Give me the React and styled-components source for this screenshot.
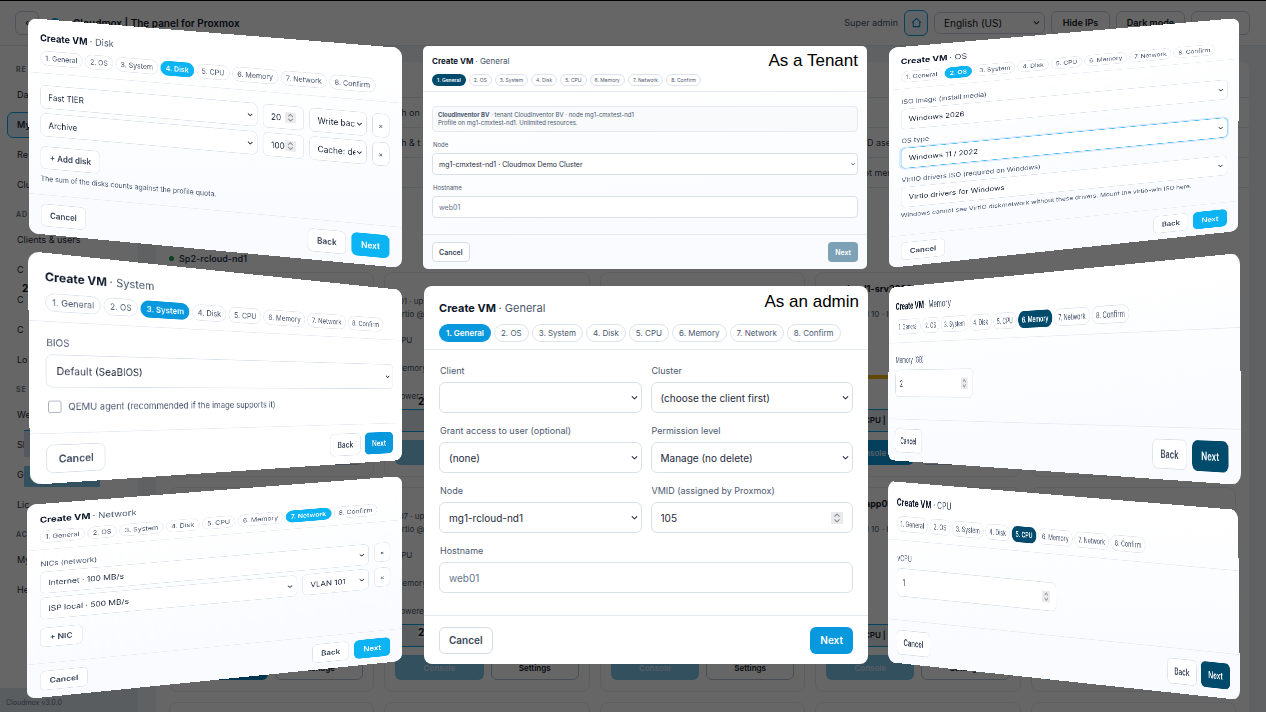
import React, { useId } from "react";
import styled, { createGlobalStyle, css, ThemeProvider } from "styled-components";

const GlobalStyle = createGlobalStyle`
  * { box-sizing: border-box; }
  html, body { margin: 0; height: 100%; overflow: hidden; background: #ffffff; }
  body, button, input, select { font-family: Inter, "Liberation Sans", sans-serif; }
  #root { height: 100%; }
`;

/* ---------- sizes shared by the dialogs ---------- */

const full = {
  pad: 21, radius: 15, headTop: 22, headH: 93, title: 16, titleLine: 20, titleGap: 12,
  pill: 12, pillH: 25, pillX: 8, pillGap: 4, bodyTop: 20, rowGap: 17, labelGap: 8,
  label: 13, labelLine: 16, control: 45, input: 14, inputX: 13, chevron: 13, chevX: 5,
  spin: 18, spinGap: 8,
  fieldRadius: 9, footH: 69, btnH: 39, btnX: 15, btnGap: 9, btnRadius: 9, help: 12, colGap: 14,
};
const regular = {
  pad: 15, radius: 8, headTop: 15, headH: 64, title: 11, titleLine: 14, titleGap: 9,
  pill: 8, pillH: 18, pillX: 6, pillGap: 3, bodyTop: 15, rowGap: 12, labelGap: 5,
  label: 9, labelLine: 12, control: 31, input: 10, inputX: 9, chevron: 9, chevX: 2,
  spin: 12, spinGap: 7,
  fieldRadius: 6, footH: 49, btnH: 27, btnX: 9, btnGap: 6, btnRadius: 6, help: 8, colGap: 9,
};
const compact = {
  pad: 9, radius: 5, headTop: 10, headH: 46, title: 8, titleLine: 10, titleGap: 8,
  pill: 5, pillH: 12, pillX: 4, pillGap: 3, bodyTop: 14, rowGap: 9, labelGap: 4,
  label: 6, labelLine: 8, control: 22, input: 7, inputX: 6, chevron: 6, chevX: 1,
  spin: 8, spinGap: 4,
  fieldRadius: 4, footH: 35, btnH: 20, btnX: 6, btnGap: 4, btnRadius: 4, help: 6, colGap: 6,
};
const m = (key) => ({ theme }) => `${theme[key]}px`;

const ACCENTS = { sky: "#0db4f4", blue: "#0798dd", navy: "#004a6c" };

/* Projects a width x height plane onto four corners: top left, top right, bottom right, bottom left. */
function project(w, h, [[x0, y0], [x1, y1], [x2, y2], [x3, y3]]) {
  const dx1 = x1 - x2, dx2 = x3 - x2, sx = x0 - x1 + x2 - x3;
  const dy1 = y1 - y2, dy2 = y3 - y2, sy = y0 - y1 + y2 - y3;
  const den = dx1 * dy2 - dx2 * dy1;
  const g = (sx * dy2 - dx2 * sy) / den;
  const k = (dx1 * sy - sx * dy1) / den;
  return `matrix3d(${[
    (x1 - x0 + g * x1) / w, (y1 - y0 + g * y1) / w, 0, g / w,
    (x3 - x0 + k * x3) / h, (y3 - y0 + k * y3) / h, 0, k / h,
    0, 0, 1, 0,
    x0, y0, 0, 1,
  ].join(",")})`;
}

/* ---------- page behind the dialogs ---------- */

const Page = styled.div`
  position: relative; height: 100%; min-height: 100%; overflow: hidden;
  display: flex; flex-direction: column; background: #edf2f7; color: #0f172a;
`;
const TopBar = styled.header`
  display: flex; align-items: center; gap: 6px; height: 46px; flex: none;
  padding: 0 16px 0 15px; background: #ffffff; border-bottom: 1px solid #e2e8f0;
`;
const BarButton = styled.button`
  height: 24px; padding: 0 8px; min-width: ${(p) => p.$min || 0}px; border-radius: 6px;
  border: 1px solid ${(p) => (p.$home ? "#0ea5e9" : "#cbd5e1")}; background: ${(p) => (p.$home ? "#f0f9ff" : "#fff")};
  color: ${(p) => (p.$home ? "#0284c7" : "#0f172a")}; font-size: 9px; font-weight: 600;
  ${(p) => p.$home && css`width: 24px; height: 26px; padding: 0; display: grid; place-items: center;`}
`;
const Brand = styled.strong`
  display: flex; align-items: center; gap: 12px; margin-left: 4px; font-size: 10px; font-weight: 600; flex: 1;
`;
const Role = styled.span` font-size: 9px; color: #475569; `;
const BarSelect = styled.label`
  display: flex; align-items: center; width: 111px; height: 22px; padding: 0 3px 0 9px;
  border: 1px solid #cbd5e1; border-radius: 6px;
  select { flex: 1; min-width: 0; border: 0; padding: 0; background: transparent; appearance: none; font-size: 10px; color: inherit; }
`;
const Shell = styled.div` flex: 1; min-height: 0; display: flex; `;
const Sidebar = styled.nav`
  width: 138px; flex: none; display: flex; flex-direction: column; background: #fff; padding: 16px 0 0;
`;
const NavTitle = styled.span`
  height: 16px; line-height: 16px; padding-left: 16px; margin: ${(p) => (p.$first ? 0 : 5)}px 0 4px;
  font-size: 7px; font-weight: 600; letter-spacing: 1px; color: #64748b;
`;
const NavLink = styled.a`
  flex: none; height: 26px; line-height: 24px; margin: 0 7px 4px; padding-left: 9px; border-radius: 6px;
  border: 1px solid ${(p) => (p.$active ? "#0ea5e9" : "transparent")}; background: ${(p) => (p.$active ? "#e0f2fe" : "none")};
  font-size: 9px; font-weight: ${(p) => (p.$active ? 600 : 400)}; color: #1e293b; text-decoration: none; white-space: nowrap;
`;
const NavFooter = styled.footer`
  margin-top: auto; height: 24px; padding: 10px 6px 0; font-size: 7px; color: #64748b; background: #e2e8f0;
`;
const Main = styled.main`
  flex: 1; min-width: 0; margin: 16px 17px 0 18px; padding: 0 13px; background: #fff; border-radius: 6px 6px 0 0; overflow: hidden;
`;
const Filters = styled.div`
  height: 156px; margin: 0 -13px; padding: 35px 0 0; color: #334155; font-size: 9px;
`;
const FilterRow = styled.div`
  display: flex; align-items: center; justify-content: space-between; height: 30px; padding: 0 358px 0 240px;
  border-top: 1px solid #e2e8f0;
`;
const NodeHeading = styled.h2`
  display: flex; align-items: center; gap: 5px; height: 15px; margin: 33px 0 6px; font-size: 9px; font-weight: 600; color: #334155;
  &::before { content: ""; width: 5px; height: 5px; border-radius: 50%; background: #16a34a; }
`;
const CardGrid = styled.div`
  display: grid; grid-template-columns: repeat(5, 1fr); gap: 10px;
`;
const VmCard = styled.article`
  height: 205px; padding: 9px 10px 0; border: 1px solid #e6ecf3; border-radius: 8px; overflow: hidden;
  display: flex; flex-direction: column; font-size: 8px; line-height: 13px; color: #475569;
`;
const VmName = styled.b` height: 13px; font-size: 9px; color: #0f172a; `;
const VmLine = styled.span` height: 13px; `;
const Meter = styled.i`
  width: 66px; height: 4px; margin: 0 0 11px; background: ${(p) => (p.$on ? "#eab308" : "transparent")};
`;
const Picker = styled.div`
  height: 23px; margin: 6px 0 8px; padding-left: 26px; line-height: 21px; background: #e2e8f0; color: #0f172a; font-weight: 600;
  border: 1px solid #0ea5e9; border-width: 1px 0;
`;
const CardButtons = styled.div` display: grid; grid-template-columns: 1fr 1fr; gap: 7px; `;
const CardButton = styled.button`
  height: 25px; padding: 0; border-radius: 6px; font-size: 8px; font-weight: 600;
  border: 1px solid ${(p) => (p.$tone ? "transparent" : "#b6c2d1")};
  background: ${(p) => p.$tone || "#fff"}; color: ${(p) => (p.$tone ? "#dbeafe" : "#0f172a")};
`;
const Fragment = styled.div`
  position: absolute; left: ${(p) => p.$x}px; top: ${(p) => p.$y}px; background: #fff; font-size: 10px; line-height: 12px; font-weight: 700;
`;
const PickFragment = styled(Fragment)`
  width: 76px; height: 57px; background: linear-gradient(#d3dfee 26px, #ffffff 26px, #ffffff 35px, #7dc8ea 35px);
  border-top: 1px solid #0ea5e9;
`;
const Shade = styled.div` position: absolute; inset: 0; background: rgba(0, 0, 0, 0.6); border-top: 1px solid #000; `;

const CARDS = [
  { tone: "#0284c7", action: "Manage" },
  { tone: "#7dc8ea", id: "101 · up", disk: "virtio @", cpu: "CPU", memory: "Memory", power: "Powered" },
  { tone: "#7dc8ea" },
  { name: "m-rcloud1-srv2022-win", tone: "#0ba0e6", disk: "mg1-rcloud 10 · IP", meter: true, plan: "2 vCPU |" },
  { tone: "#7dc8ea" },
  { tone: "#0284c7", action: "Manage" },
  { tone: "#7dc8ea", id: "107 · up", disk: "virtio @", cpu: "CPU", memory: "Memory", power: "Powered" },
  { tone: "#7dc8ea" },
  { name: "mg1-rcloapp01", tone: "#7dc8ea", disk: "mg1-rcloud 10 · IP", plan: "2 vCPU |" },
  { tone: "#7dc8ea" },
];

function VmCards() {
  return (
    <CardGrid>
      {CARDS.map((c, i) => (
        <VmCard key={i}>
          <VmName>{c.name}</VmName>
          <VmLine>{c.id}</VmLine>
          <VmLine>{c.disk}</VmLine>
          <VmLine />
          <VmLine>{c.cpu}</VmLine>
          <Meter />
          <VmLine>{c.memory}</VmLine>
          <Meter $on={c.meter} />
          <VmLine>{c.power}</VmLine>
          <Picker>{c.plan}</Picker>
          <CardButtons>
            <CardButton $tone={c.tone}>Console</CardButton>
            <CardButton>{c.action || "Settings"}</CardButton>
          </CardButtons>
        </VmCard>
      ))}
      {[1, 2, 3, 4, 5].map((n) => <VmCard key={n} />)}
    </CardGrid>
  );
}

/* ---------- dialog parts ---------- */

const Stage = styled.div` position: absolute; top: 0; left: 50%; margin-left: -633px; `;

const Window = styled.section`
  position: absolute; left: 0; top: 0; transform-origin: 0 0;
  width: ${(p) => p.$w}px; height: ${(p) => p.$h}px;
  ${(p) => (p.$quad ? css`transform: ${project(p.$w, p.$h, p.$quad)};` : css`left: ${p.$x}px; top: ${p.$y}px;`)}
  display: flex; flex-direction: column; overflow: hidden;
  border-radius: ${m("radius")};
  background: ${(p) => (p.$plain ? "#fff" : "linear-gradient(175deg, #ffffff 20%, #f9fbfe 75%)")};
  color: #1e293b;
`;
const Head = styled.header`
  flex: none; height: ${m("headH")}; padding: ${m("headTop")} ${m("pad")} 0; border-bottom: 1px solid #e5eaf1;
`;
const Title = styled.h1`
  margin: 0 0 ${m("titleGap")}; font-size: ${m("title")}; line-height: ${m("titleLine")}; font-weight: 700; color: #0f172a;
  span { font-weight: 400; color: #475569; }
`;
const Steps = styled.ol` display: flex; gap: ${m("pillGap")}; margin: 0; padding: 0; list-style: none; `;
const Step = styled.li`
  display: flex; align-items: center; height: ${m("pillH")}; padding: 0 ${m("pillX")}; border-radius: 99px;
  border: 1px solid ${(p) => (p.$accent ? "transparent" : "#dde3ec")};
  background: ${(p) => p.$accent || "#fff"}; color: ${(p) => (p.$accent ? "#fff" : "#4b586e")};
  font-size: ${m("pill")}; font-weight: ${(p) => (p.$accent ? 600 : 400)}; white-space: nowrap;
`;
const Body = styled.div`
  flex: 1; min-height: 0; padding: ${m("bodyTop")} ${m("pad")} 0; display: flex; flex-direction: column; gap: ${m("rowGap")};
`;
const Foot = styled.footer`
  flex: none; height: ${m("footH")}; padding: 0 ${m("pad")}; display: flex; align-items: center; gap: ${m("btnGap")};
  border-top: 1px solid #e5eaf1;
`;
const Push = styled.span` flex: 1; `;
const Button = styled.button`
  height: ${m("btnH")}; padding: 0 ${m("btnX")}; border-radius: ${m("btnRadius")};
  border: 1px solid ${(p) => (p.$accent ? "transparent" : "#d6dde7")};
  background: ${(p) => p.$accent || "#fff"}; color: ${(p) => (p.$accent ? "#fff" : "#3b475a")};
  font-size: ${m("input")}; font-weight: 600; white-space: nowrap; align-self: ${(p) => p.$self || "auto"};
`;
const RemoveButton = styled.button`
  width: 29px; height: 40px; flex: none; padding: 0; border: 1px solid #d6dde7; border-radius: 9px;
  background: #fff; color: #475569; font-size: 12px;
`;
const FieldBox = styled.div` display: flex; flex-direction: column; gap: ${m("labelGap")}; width: ${(p) => p.$width || "auto"}; min-width: 0; `;
const Label = styled.label` padding-left: 1px; font-size: ${m("label")}; line-height: ${m("labelLine")}; color: #4b586e; white-space: nowrap; `;
const Control = styled.div`
  display: flex; align-items: center; height: ${(p) => (p.$h ? `${p.$h}px` : p.theme.control + "px")};
  width: ${(p) => (p.$width ? `${p.$width}px` : "auto")}; ${(p) => (p.$grow ? "flex: 1; min-width: 0;" : "flex: none;")}
  padding: 0 ${m("chevX")} 0 ${m("inputX")}; background: #fff;
  border: 1px solid ${(p) => (p.$focus ? "#38b6ee" : "#d9e0ea")}; border-radius: ${m("fieldRadius")};
  box-shadow: ${(p) => (p.$focus ? "0 0 0 3px #dbeafe" : "none")};
  select, input {
    flex: 1; min-width: 0; width: 0; height: 100%; padding: 0; margin: 0; border: 0; outline: 0; background: transparent;
    appearance: none; font-size: ${m("input")}; color: #1e293b; -moz-appearance: textfield;
  }
  input::-webkit-inner-spin-button { display: none; }
  input::placeholder { color: #64748b; opacity: 1; }
`;
const Arrow = styled.svg` flex: none; width: ${m("chevron")}; height: ${m("chevron")}; `;
const Spin = styled.svg` flex: none; width: ${m("spin")}; height: ${m("spin")}; margin-right: ${m("spinGap")}; background: #ebebee; `;
const Grid = styled.div` display: grid; grid-template-columns: 1fr 1fr; gap: ${m("rowGap")} ${m("colGap")}; `;
const Wide = styled.div` grid-column: 1 / -1; `;
const Line = styled.div` display: flex; gap: 9px; `;
const Stack = styled.div` display: flex; flex-direction: column; gap: ${(p) => p.$gap}px; align-items: stretch; `;
const Help = styled.p` margin: 0; font-size: ${m("help")}; line-height: ${m("labelLine")}; color: #4b586e; `;
const Check = styled.label`
  display: flex; align-items: center; gap: 9px; height: 18px; padding-left: 3px; font-size: ${m("label")}; color: #4b586e;
  input { width: 17px; height: 17px; margin: 0; appearance: none; border: 1px solid #8b95a5; border-radius: 3px; background: #fff; }
`;
const Notice = styled.p`
  margin: 0; height: 26px; padding: 4px 5px; border: 1px solid #e5eaf1; border-radius: 4px; background: #f8fafc;
  font-size: 6px; line-height: 8px; color: #4b586e; flex: none;
`;
const Caption = styled.span`
  position: absolute; top: ${(p) => p.$top}px; right: 9px; font: 17px/20px "Liberation Sans", sans-serif; color: #000;
`;

function Chevron() {
  return (
    <Arrow viewBox="0 0 12 12" fill="none" stroke="#1e293b" strokeWidth="1.4" aria-hidden="true"><path d="M2.5 4.4 6 7.8l3.5-3.4" /></Arrow>
  );
}

function Pick({ value, id, label, ...rest }) {
  return (
    <Control {...rest}>
      <select id={id} aria-label={label} defaultValue={value}><option>{value}</option></select>
      <Chevron />
    </Control>
  );
}

function NumberBox({ value, id, label, ...rest }) {
  return (
    <Control {...rest}>
      <input id={id} aria-label={label} type="number" defaultValue={value} />
      <Spin viewBox="0 0 14 14" fill="none" stroke="#8a8f98" strokeWidth="1.3" aria-hidden="true">
        <path d="M4 5.5 7 2.5 10 5.5M4 8.5 7 11.5 10 8.5" />
      </Spin>
    </Control>
  );
}

function Field({ label, width, children }) {
  const id = useId();
  return (
    <FieldBox $width={width}>
      <Label htmlFor={id}>{label}</Label>
      {React.cloneElement(children, { id })}
    </FieldBox>
  );
}

function TextBox({ id, placeholder }) {
  return <Control><input id={id} type="text" placeholder={placeholder} /></Control>;
}

const STEPS = ["General", "OS", "System", "Disk", "CPU", "Memory", "Network", "Confirm"];

function Dialog({ step, accent, size = full, back = true, nextColor, caption, captionTop, children, ...rest }) {
  const color = ACCENTS[accent];
  return (
    <ThemeProvider theme={size}>
      <Window {...rest}>
        <Head>
          <Title>Create VM <span>· {step}</span></Title>
          <Steps>
            {STEPS.map((s, i) => <Step key={s} $accent={s === step ? color : undefined}>{i + 1}. {s}</Step>)}
          </Steps>
          {caption && <Caption $top={captionTop}>{caption}</Caption>}
        </Head>
        <Body>{children}</Body>
        <Foot>
          <Button>Cancel</Button>
          <Push />
          {back && <Button>Back</Button>}
          <Button $accent={nextColor || color}>Next</Button>
        </Foot>
      </Window>
    </ThemeProvider>
  );
}

const QUADS = {
  disk: [[28, 18], [402, 48], [402, 268], [29, 233]],
  os: [[889, 48], [1239, 18], [1238, 231], [889, 268]],
  system: [[28, 251], [402, 290], [402, 460], [30, 485]],
  memory: [[889, 288], [1240, 253], [1241, 485], [888, 460]],
  network: [[27, 505], [402, 476], [402, 661], [27, 699]],
  cpu: [[888, 481], [1238, 510], [1240, 700], [888, 662]],
};

export default function App() {
  return (
    <Page>
      <GlobalStyle />
      <TopBar>
        <BarButton $min={24}>‹</BarButton>
        <Brand>
          <svg width="12" height="12" viewBox="0 0 12 12" aria-hidden="true"><circle cx="6" cy="6" r="5" fill="#0ea5e9" /></svg>
          Cloudmox | The panel for Proxmox
        </Brand>
        <Role>Super admin</Role>
        <BarButton $home aria-label="Home">
          <svg width="11" height="11" viewBox="0 0 12 12" fill="none" stroke="currentColor" strokeWidth="1.1" aria-hidden="true">
            <path d="M1 6 6 1.5 11 6M2.5 5v5.5h7V5" />
          </svg>
        </BarButton>
        <ThemeProvider theme={regular}>
          <BarSelect>
            <select aria-label="Language" defaultValue="English (US)"><option>English (US)</option></select>
            <Chevron />
          </BarSelect>
        </ThemeProvider>
        <BarButton $min={59}>Hide IPs</BarButton>
        <BarButton $min={69}>Dark mode</BarButton>
        <BarButton $min={59} aria-label="Account" />
      </TopBar>
      <Shell>
        <Sidebar>
          <NavTitle $first>RE</NavTitle>
          <NavLink href="#da">Da</NavLink>
          <NavLink href="#vms" $active>My</NavLink>
          <NavLink href="#re">Re</NavLink>
          <NavLink href="#clu">Clu</NavLink>
          <NavTitle>AD</NavTitle>
          <NavLink href="#clients">Clients &amp; users</NavLink>
          <NavLink href="#c1">C</NavLink>
          <NavLink href="#c2">C</NavLink>
          <NavLink href="#c3">C</NavLink>
          <NavLink href="#lo">Lo</NavLink>
          <NavTitle>SE</NavTitle>
          <NavLink href="#we">We</NavLink>
          <NavLink href="#sh">Sl</NavLink>
          <NavLink href="#ge">Ge</NavLink>
          <NavLink href="#lic">Lic</NavLink>
          <NavTitle>AC</NavTitle>
          <NavLink href="#my">My</NavLink>
          <NavLink href="#he">He</NavLink>
          <NavFooter>Cloudmox v3.0.0</NavFooter>
        </Sidebar>
        <Main>
          <Filters>
            <FilterRow><span>ch on</span></FilterRow>
            <FilterRow><span>ch &amp; t</span><span>D ase</span></FilterRow>
            <FilterRow><span /><span>ot mer</span></FilterRow>
            <FilterRow />
          </Filters>
          <NodeHeading>Sp2-rcloud-nd1</NodeHeading>
          <VmCards />
        </Main>
      </Shell>
      <Fragment $x={22} $y={282}>2</Fragment>
      <Fragment $x={418} $y={395}>2</Fragment>
      <Fragment $x={418} $y={626}>2</Fragment>
      <PickFragment $x={24} $y={430} />
      <Shade />

      <Stage>
        <Dialog step="Disk" accent="sky" $w={640} $h={370} $quad={QUADS.disk}>
          <Stack $gap={8}>
            {[["Fast TIER", 20, "Write back"], ["Archive", 100, "Cache: default"]].map(([tier, gb, cache]) => (
              <Line key={tier}>
                <Pick $grow $h={40} value={tier} label="Storage" />
                <NumberBox $h={40} $width={70} value={gb} label="Size in GB" />
                <Pick $h={40} $width={97} value={cache} label="Cache" />
                <RemoveButton aria-label="Remove disk">×</RemoveButton>
              </Line>
            ))}
          </Stack>
          <Stack $gap={9}>
            <Button $self="flex-start">+ Add disk</Button>
            <Help>The sum of the disks counts against the profile quota.</Help>
          </Stack>
        </Dialog>

        <Dialog step="General" accent="navy" size={compact} back={false} nextColor="#7ea2b5" caption="As a Tenant" captionTop={5}
          $w={444} $h={223} $x={423} $y={46}>
          <Notice><b>CloudInventor BV</b> · tenant CloudInventor BV · node mg1-cmxtest-nd1<br />Profile on mg1-cmxtest-nd1. Unlimited resources.</Notice>
          <Field label="Node"><Pick value="mg1-cmxtest-nd1 · Cloudmox Demo Cluster" /></Field>
          <Field label="Hostname"><TextBox placeholder="web01" /></Field>
        </Dialog>

        <Dialog step="OS" accent="sky" $w={640} $h={484} $quad={QUADS.os}>
          <Field label="ISO image (install media)"><Pick value="Windows 2026" /></Field>
          <Field label="OS type"><Pick $focus value="Windows 11 / 2022" /></Field>
          <Stack $gap={9}>
            <Field label="VirtIO drivers ISO (required on Windows)"><Pick value="Virtio drivers for Windows" /></Field>
            <Help>Windows cannot see VirtIO disk/network without these drivers. Mount the virtio-win ISO here.</Help>
          </Stack>
        </Dialog>

        <Dialog step="System" accent="blue" $plain $w={640} $h={313} $quad={QUADS.system}>
          <Field label="BIOS"><Pick value="Default (SeaBIOS)" /></Field>
          <Check><input type="checkbox" />QEMU agent (recommended if the image supports it)</Check>
        </Dialog>

        <Dialog step="General" accent="blue" size={regular} back={false} caption="As an admin" captionTop={6} $plain
          $w={444} $h={378} $x={424} $y={286}>
          <Grid>
            <Field label="Client"><Pick value="" /></Field>
            <Field label="Cluster"><Pick value="(choose the client first)" /></Field>
            <Field label="Grant access to user (optional)"><Pick value="(none)" /></Field>
            <Field label="Permission level"><Pick value="Manage (no delete)" /></Field>
            <Field label="Node"><Pick value="mg1-rcloud-nd1" /></Field>
            <Field label="VMID (assigned by Proxmox)"><NumberBox value={105} /></Field>
            <Wide><Field label="Hostname"><TextBox placeholder="web01" /></Field></Wide>
          </Grid>
        </Dialog>

        <Dialog step="Memory" accent="navy" $w={800} $h={287} $quad={QUADS.memory}>
          <Field label="Memory (GB)" width="218px"><NumberBox value={2} /></Field>
        </Dialog>

        <Dialog step="Network" accent="sky" $w={640} $h={390} $quad={QUADS.network}>
          <Stack $gap={8}>
            <Label as="span">NICs (network)</Label>
            <Line>
              <Pick $grow $h={44} value="Internet · 100 MB/s" label="Network 1" />
              <RemoveButton aria-label="Remove network 1">×</RemoveButton>
            </Line>
            <Line>
              <Pick $grow $h={44} value="ISP local · 500 MB/s" label="Network 2" />
              <Pick $h={44} $width={117} value="VLAN 101" label="VLAN" />
              <RemoveButton aria-label="Remove network 2">×</RemoveButton>
            </Line>
          </Stack>
          <Button $self="flex-start">+ NIC</Button>
        </Dialog>

        <Dialog step="CPU" accent="navy" $w={800} $h={288} $quad={QUADS.cpu}>
          <Field label="vCPU" width="372px"><NumberBox value={1} /></Field>
        </Dialog>
      </Stage>
    </Page>
  );
}
